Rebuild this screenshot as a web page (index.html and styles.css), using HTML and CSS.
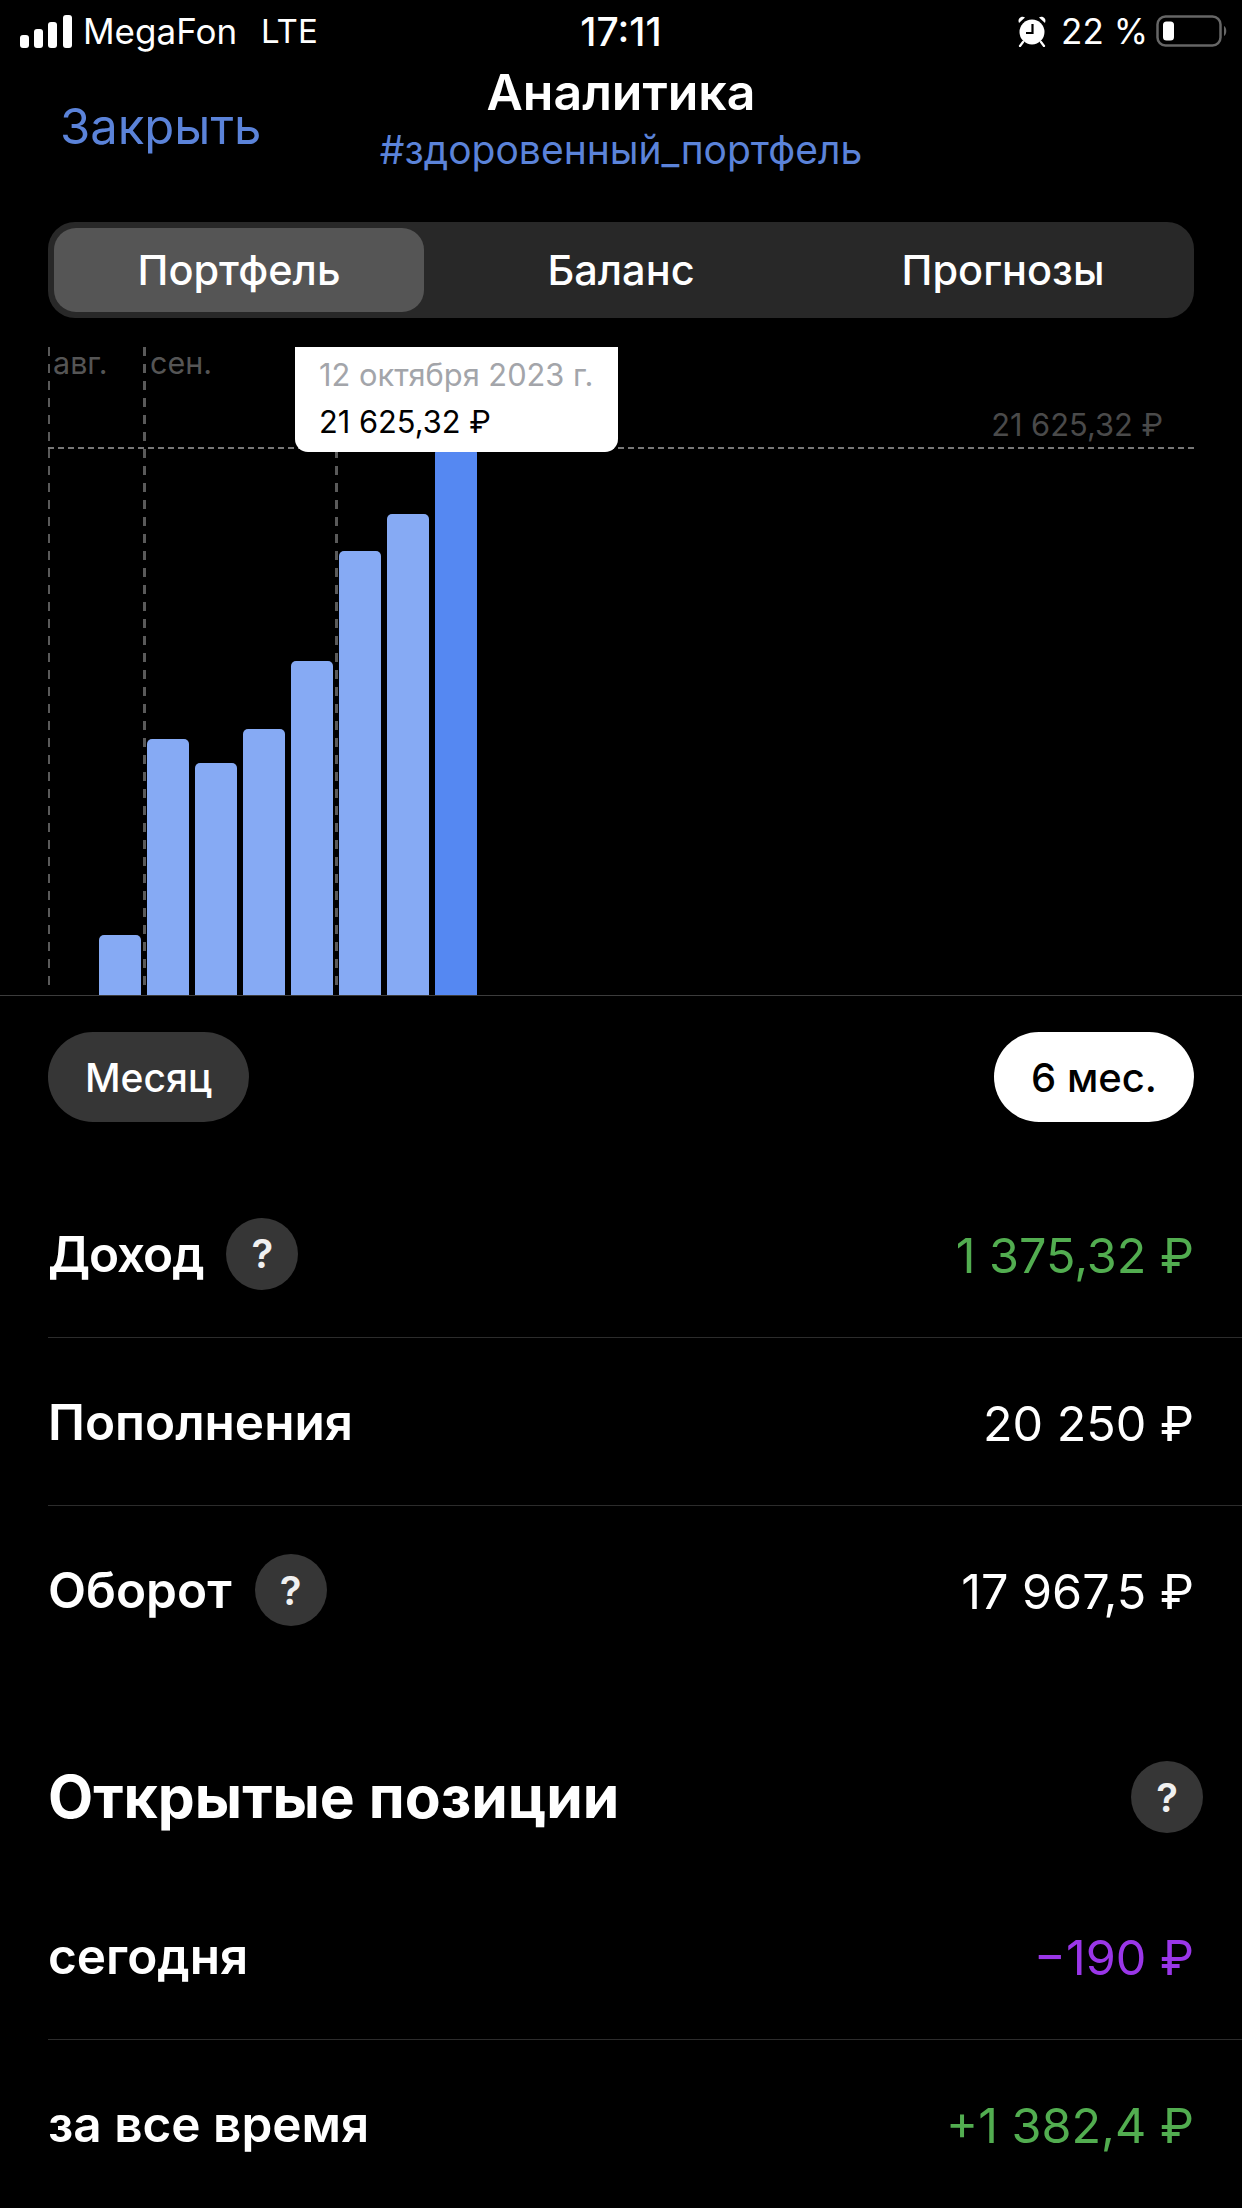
FILE: index.html
```html
<!DOCTYPE html>
<html lang="ru">
<head>
<meta charset="utf-8">
<title>Аналитика</title>
<link rel="stylesheet" href="styles.css">
</head>
<body>
<div class="page">
  <div class="status">
    <div class="status-left">
      <svg class="signal" width="52" height="33" viewBox="0 0 52 33"><rect x="0" y="20" width="9" height="13" rx="3"/><rect x="14" y="14" width="9" height="19" rx="3"/><rect x="28" y="7" width="9" height="26" rx="3"/><rect x="43" y="0" width="9" height="33" rx="3"/></svg>
      <span class="carrier">MegaFon</span>
      <span class="net">LTE</span>
    </div>
    <div class="status-time">17:11</div>
    <div class="status-right">
      <svg class="alarm" width="30" height="32" viewBox="0 0 30 32"><circle cx="15" cy="17" r="12.5" fill="#fff"/><path d="M2 8 L8 2.5 C5 0.5 0 3 2 8Z M28 8 L22 2.5 C25 0.5 30 3 28 8Z" fill="#fff"/><path d="M6 27 L3 31 M24 27 L27 31" stroke="#fff" stroke-width="2.2" stroke-linecap="round"/><path d="M15.5 9 V18 H9" fill="none" stroke="#000" stroke-width="2.2"/></svg>
      <span class="pct">22 %</span>
      <svg class="battery" width="72" height="32" viewBox="0 0 72 32"><rect x="1.5" y="1.5" width="63" height="29" rx="8" fill="none" stroke="#666" stroke-width="2.5"/><rect x="7" y="6.500" width="11" height="19" rx="3.500" fill="#fff"/><path d="M68 11 C71 12.500 71 19.500 68 21Z" fill="#666"/></svg>
    </div>
  </div>

  <header class="nav">
    <a class="close">Закрыть</a>
    <div class="nav-center">
      <div class="title">Аналитика</div>
      <div class="tag">#здоровенный_портфель</div>
    </div>
  </header>

  <div class="segments">
    <div class="seg seg-on">Портфель</div>
    <div class="seg">Баланс</div>
    <div class="seg">Прогнозы</div>
  </div>

  <div class="chart">
    <i class="vline vline-thin vline-a"></i>
    <i class="vline vline-b"></i>
    <i class="vline vline-c"></i>
    <i class="hline"></i>
    <span class="month month-a">авг.</span>
    <span class="month month-b">сен.</span>
    <span class="max">21 625,32 ₽</span>
    <div class="bars">
      <div class="bar" style="height:60px"></div>
      <div class="bar" style="height:256px"></div>
      <div class="bar" style="height:232px"></div>
      <div class="bar" style="height:266px"></div>
      <div class="bar" style="height:334px"></div>
      <div class="bar" style="height:444px"></div>
      <div class="bar" style="height:481px"></div>
      <div class="bar bar-on" style="height:547px"></div>
    </div>
    <div class="tip">
      <div class="tip-date">12 октября 2023 г.</div>
      <div class="tip-val">21 625,32 ₽</div>
    </div>
  </div>

  <div class="periods">
    <div class="pill">Месяц</div>
    <div class="pill pill-on">6 мес.</div>
  </div>

  <div class="row row-line">
    <div class="row-label"><span class="tight">Доход</span> <span class="q">?</span></div>
    <div class="row-val green">1 375,32 ₽</div>
  </div>
  <div class="row row-line">
    <div class="row-label">Пополнения</div>
    <div class="row-val">20 250 ₽</div>
  </div>
  <div class="row">
    <div class="row-label">Оборот <span class="q">?</span></div>
    <div class="row-val">17 967,5 ₽</div>
  </div>

  <div class="section">
    <h2 class="section-title">Открытые позиции</h2>
    <span class="q q-section">?</span>
  </div>

  <div class="row row-line">
    <div class="row-label">сегодня</div>
    <div class="row-val purple">−190 ₽</div>
  </div>
  <div class="row">
    <div class="row-label">за все время</div>
    <div class="row-val green">+1 382,4 ₽</div>
  </div>
</div>
</body>
</html>
```

FILE: styles.css
```css
* { box-sizing: border-box; }
html, body { margin: 0; padding: 0; background: #000; }
body { width: 1242px; height: 2208px; overflow: hidden; }
.page {
  width: 1242px;
  height: 2208px;
  background: #000;
  color: #fff;
  font-family: Inter, "Noto Sans", "Liberation Sans", sans-serif;
  display: flex;
  flex-direction: column;
}

/* status bar */
.status {
  height: 62px;
  padding: 0 14px;
  display: grid;
  grid-template-columns: 1fr auto 1fr;
  align-items: center;
  font-size: 35px;
}
.status-left { display: flex; align-items: center; padding-left: 6px; }
.signal { fill: #fff; margin-right: 11px; }
.net { margin-left: 24px; font-size: 33px; }
.status-time { font-size: 39px; font-weight: 500; }
.status-right { display: flex; align-items: center; justify-content: flex-end; }
.pct { margin-left: 14px; margin-right: 8px; }

/* nav */
.nav {
  height: 160px;
  position: relative;
  display: flex;
  justify-content: center;
}
.close {
  position: absolute;
  left: 60px;
  top: 36px;
  font-size: 49px;
  line-height: 58px;
  color: #5b83d9;
}
.nav-center { text-align: center; }
.title { font-size: 50px; line-height: 56px; font-weight: 600; margin-top: 2px; }
.tag { font-size: 39px; line-height: 44px; margin-top: 8px; color: #5b83d9; }

/* segmented control */
.segments {
  margin: 0 48px;
  height: 96px;
  padding: 6px;
  border-radius: 27px;
  background: #282828;
  display: grid;
  grid-template-columns: 370px 1fr 370px;
}
.seg {
  display: flex;
  align-items: center;
  justify-content: center;
  font-size: 41.5px;
  font-weight: 500;
  border-radius: 22px;
}
.seg-on { background: #555; }

/* chart */
.chart {
  height: 678px;
  position: relative;
  border-bottom: 1px solid #3c3c3c;
  display: flex;
  align-items: flex-end;
}
.bars {
  display: flex;
  align-items: flex-end;
  gap: 6px;
  padding-left: 99px;
  position: relative;
}
.bar {
  width: 42px;
  border-radius: 5px 5px 0 0;
  background: #86aaf4;
}
.bar-on { background: #5588f2; }
.vline {
  position: absolute;
  top: 29px;
  bottom: 7px;
  width: 3px;
  background: repeating-linear-gradient(to bottom, #5a5a5a 0 9px, transparent 9px 17px);
}
.vline-thin { width: 2px; }
.vline-a { left: 48px; }
.vline-b { left: 143px; }
.vline-c { left: 335px; }
.hline {
  position: absolute;
  left: 48px;
  right: 48px;
  top: 129px;
  height: 2px;
  background: repeating-linear-gradient(to right, #777 0 6px, transparent 6px 10px);
}
.month {
  position: absolute;
  top: 26px;
  font-size: 30.5px;
  line-height: 38px;
  color: #555;
}
.month-a { left: 53px; }
.month-b { left: 150px; }
.max {
  position: absolute;
  right: 79px;
  top: 88px;
  font-size: 30.8px;
  line-height: 38px;
  color: #4a4a4a;
}
.tip {
  position: absolute;
  left: 295px;
  top: 29px;
  width: 323px;
  height: 105px;
  padding: 8px 0 0 24px;
  border-radius: 0 0 13px 13px;
  background: #fff;
  color: #000;
  white-space: nowrap;
}
.tip-date { font-size: 30.8px; line-height: 40px; color: #a3a5aa; }
.tip-val { font-size: 30.8px; line-height: 40px; margin-top: 7px; }

/* period pills */
.periods {
  margin: 36px 48px 0;
  display: flex;
  justify-content: space-between;
}
.pill {
  height: 90px;
  padding: 0 37px;
  border-radius: 45px;
  background: #363636;
  display: flex;
  align-items: center;
  font-size: 39px;
  font-weight: 500;
}
.pill-on { background: #fff; color: #000; font-size: 40px; }

/* rows */
.row {
  height: 168px;
  margin-left: 48px;
  padding-right: 48px;
  display: flex;
  align-items: center;
  justify-content: space-between;
  flex: none;
}
.periods + .row { margin-top: 48px; }
.row-line { border-bottom: 1px solid #2c2c2c; }
.row-label {
  display: flex;
  align-items: center;
  font-size: 49.5px;
  font-weight: 600;
  gap: 23px;
}
.tight { letter-spacing: -1.1px; }
.row-val { font-size: 48.500px; padding-top: 3px; }
.green { color: #52ad50; }
.purple { color: #9a36e8; }
.q {
  width: 72px;
  height: 72px;
  border-radius: 50%;
  background: #363636;
  color: #f0f0f0;
  display: flex;
  align-items: center;
  justify-content: center;
  font-size: 40px;
  font-weight: 600;
  flex: none;
}

/* section heading */
.section {
  height: 198px;
  padding: 48px 39px 0 48px;
  display: flex;
  align-items: center;
  justify-content: space-between;
  flex: none;
}
.section-title { margin: -2px 0 0; font-size: 58.7px; font-weight: 700; }
```
